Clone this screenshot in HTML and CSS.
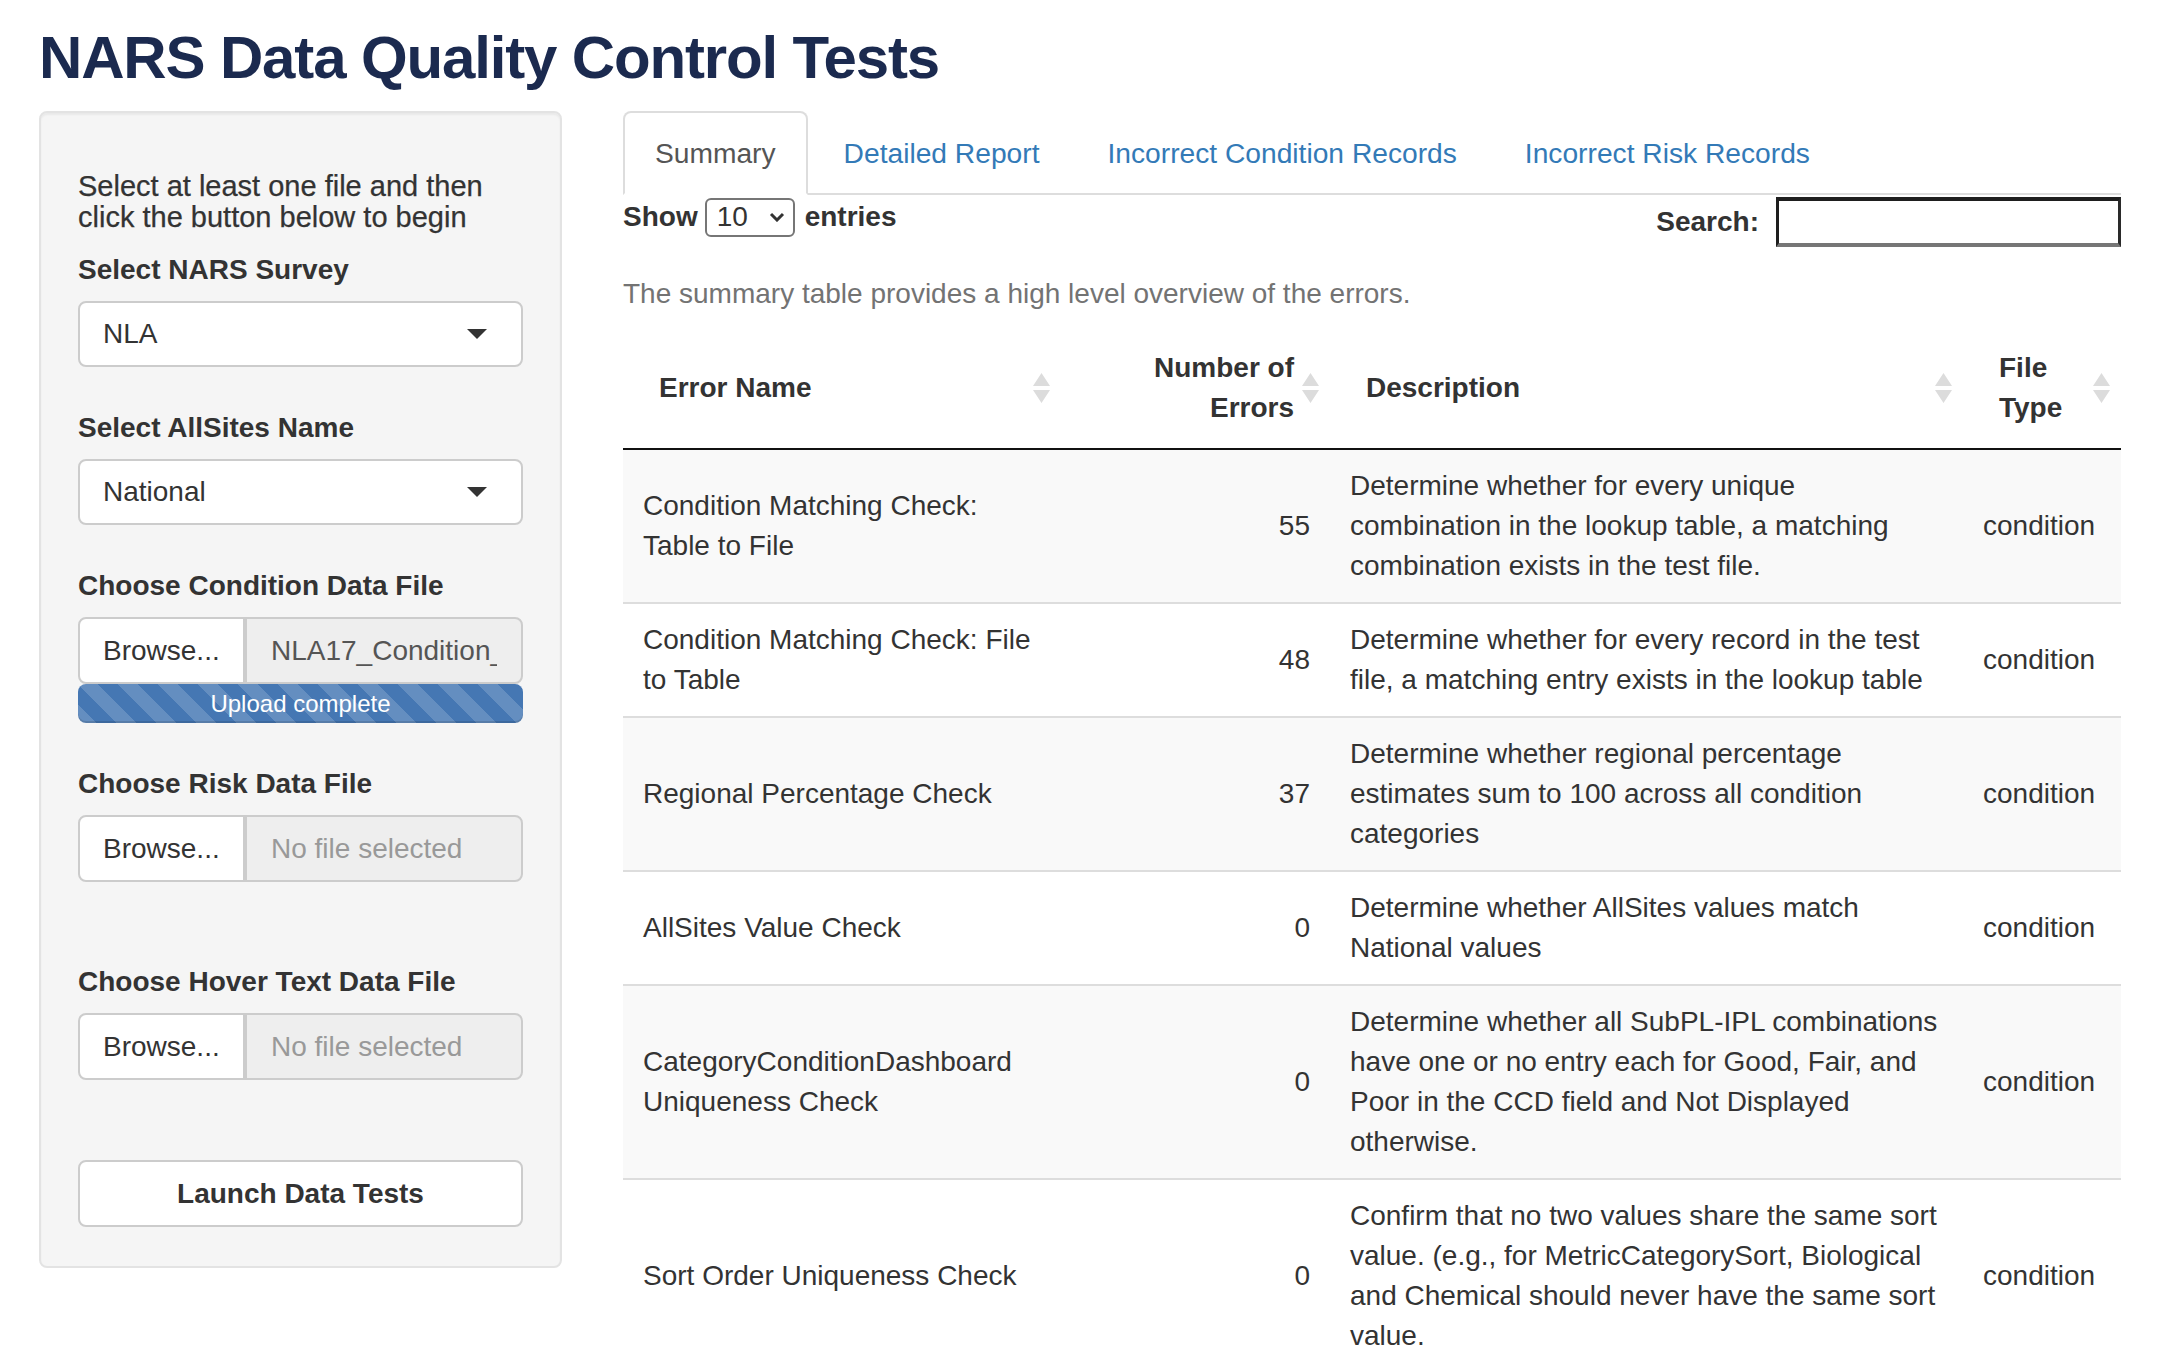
FILE: index.html
```html
<!DOCTYPE html>
<html lang="en">
<head>
<meta charset="utf-8">
<title>NARS Data Quality Control Tests</title>
<link rel="stylesheet" href="styles.css">
</head>
<body>
<div class="page">
  <h1 class="title">NARS Data Quality Control Tests</h1>
  <div class="layout">
    <aside class="well">
      <h5 class="intro">Select at least one file and then click the button below to begin</h5>

      <div class="group">
        <div class="lbl">Select NARS Survey</div>
        <div class="select"><span>NLA</span><svg class="caret" width="20" height="10" viewBox="0 0 20 10"><path d="M0 0H20L10 10Z" fill="#333"/></svg></div>
      </div>

      <div class="group">
        <div class="lbl">Select AllSites Name</div>
        <div class="select"><span>National</span><svg class="caret" width="20" height="10" viewBox="0 0 20 10"><path d="M0 0H20L10 10Z" fill="#333"/></svg></div>
      </div>

      <div class="group">
        <div class="lbl">Choose Condition Data File</div>
        <div class="file">
          <div class="browse">Browse...</div>
          <div class="fname"><div class="fname-text filled">NLA17_Condition_</div></div>
        </div>
        <div class="progress">Upload complete</div>
      </div>

      <div class="group">
        <div class="lbl">Choose Risk Data File</div>
        <div class="file">
          <div class="browse">Browse...</div>
          <div class="fname"><div class="fname-text">No file selected</div></div>
        </div>
        <div class="progress is-hidden"></div>
      </div>

      <div class="group">
        <div class="lbl">Choose Hover Text Data File</div>
        <div class="file">
          <div class="browse">Browse...</div>
          <div class="fname"><div class="fname-text">No file selected</div></div>
        </div>
        <div class="progress is-hidden"></div>
      </div>

      <div class="btn">Launch Data Tests</div>
    </aside>

    <main class="main">
      <ul class="tabs">
        <li class="tab active">Summary</li>
        <li class="tab">Detailed Report</li>
        <li class="tab">Incorrect Condition Records</li>
        <li class="tab">Incorrect Risk Records</li>
      </ul>

      <div class="dt-controls">
        <div class="dt-length">
          <span>Show</span>
          <span class="len-select"><span>10</span><svg width="16" height="10" viewBox="0 0 16 10"><path d="M2 2L8 8L14 2" fill="none" stroke="#333" stroke-width="3"/></svg></span>
          <span>entries</span>
        </div>
        <div class="dt-filter">
          <span>Search:</span>
          <span class="search-input"></span>
        </div>
      </div>

      <p class="summary-note">The summary table provides a high level overview of the errors.</p>

      <table class="dt">
        <colgroup>
          <col class="c-name">
          <col class="c-num">
          <col class="c-desc">
          <col class="c-type">
        </colgroup>
        <thead>
          <tr>
            <th>Error Name<svg class="sort" viewBox="0 0 17 30"><path d="M0 13L8.5 0L17 13Z M0 17H17L8.5 30Z" fill="#dcdcdc"/></svg></th>
            <th class="num">Number of Errors<svg class="sort" viewBox="0 0 17 30"><path d="M0 13L8.5 0L17 13Z M0 17H17L8.5 30Z" fill="#dcdcdc"/></svg></th>
            <th>Description<svg class="sort" viewBox="0 0 17 30"><path d="M0 13L8.5 0L17 13Z M0 17H17L8.5 30Z" fill="#dcdcdc"/></svg></th>
            <th>File Type<svg class="sort" viewBox="0 0 17 30"><path d="M0 13L8.5 0L17 13Z M0 17H17L8.5 30Z" fill="#dcdcdc"/></svg></th>
          </tr>
        </thead>
        <tbody>
          <tr class="odd">
            <td>Condition Matching Check: Table to File</td>
            <td class="num">55</td>
            <td>Determine whether for every unique combination in the lookup table, a matching combination exists in the test file.</td>
            <td>condition</td>
          </tr>
          <tr>
            <td>Condition Matching Check: File to Table</td>
            <td class="num">48</td>
            <td>Determine whether for every record in the test file, a matching entry exists in the lookup table</td>
            <td>condition</td>
          </tr>
          <tr class="odd">
            <td>Regional Percentage Check</td>
            <td class="num">37</td>
            <td>Determine whether regional percentage estimates sum to 100 across all condition categories</td>
            <td>condition</td>
          </tr>
          <tr>
            <td>AllSites Value Check</td>
            <td class="num">0</td>
            <td>Determine whether AllSites values match National values</td>
            <td>condition</td>
          </tr>
          <tr class="odd">
            <td>CategoryConditionDashboard Uniqueness Check</td>
            <td class="num">0</td>
            <td>Determine whether all SubPL-IPL combinations have one or no entry each for Good, Fair, and Poor in the CCD field and Not Displayed otherwise.</td>
            <td>condition</td>
          </tr>
          <tr>
            <td>Sort Order Uniqueness Check</td>
            <td class="num">0</td>
            <td>Confirm that no two values share the same sort value. (e.g., for MetricCategorySort, Biological and Chemical should never have the same sort value.</td>
            <td>condition</td>
          </tr>
        </tbody>
      </table>
    </main>
  </div>
</div>
</body>
</html>
```

FILE: styles.css
```css
* { box-sizing: border-box; }

body {
  margin: 0;
  background: #fff;
  color: #333;
  font-family: "Liberation Sans", Arial, Helvetica, sans-serif;
  font-size: 28px;
  line-height: 40px;
}

.page {
  padding: 25px 0 0 39px;
}

.title {
  margin: 0 0 20px;
  font-size: 60px;
  line-height: 66px;
  letter-spacing: -1.15px;
  font-weight: 700;
  color: #1b2a4f;
}

.layout {
  display: flex;
  align-items: flex-start;
  gap: 61px;
}

/* ---------- sidebar ---------- */
.well {
  width: 523px;
  flex: none;
  background: #f5f5f5;
  border: 2px solid #e3e3e3;
  border-radius: 8px;
  box-shadow: inset 0 2px 2px rgba(0, 0, 0, 0.05);
  padding: 36px 37px 39px;
}

.intro {
  margin: 22px 0 17px;
  font-size: 29px;
  line-height: 31px;
  font-weight: 400;
  color: #333;
  -webkit-text-stroke: 0.25px #333;
}

.group {
  margin-bottom: 41px;
}

.lbl {
  font-weight: 700;
  line-height: 40px;
  margin-bottom: 11px;
}

.select {
  height: 66px;
  background: #fff;
  border: 2px solid #ccc;
  border-radius: 8px;
  display: flex;
  align-items: center;
  justify-content: space-between;
  padding: 0 34px 0 23px;
}

.file {
  display: flex;
  height: 67px;
}

.browse {
  width: 167px;
  flex: none;
  background: #fff;
  border: 2px solid #ccc;
  border-radius: 8px 0 0 8px;
  padding-left: 23px;
  display: flex;
  align-items: center;
}

.fname {
  flex: 1;
  min-width: 0;
  background: #eee;
  border: 2px solid #ccc;
  border-radius: 0 8px 8px 0;
  padding: 0 24px;
  display: flex;
  align-items: center;
}

.fname-text {
  width: 100%;
  overflow: hidden;
  white-space: nowrap;
  color: #999;
}

.fname-text.filled {
  color: #555;
}

.progress {
  height: 39px;
  border-radius: 8px;
  background-color: #4577b3;
  background-image: linear-gradient(45deg,
    rgba(255, 255, 255, 0.17) 25%, transparent 25%, transparent 50%,
    rgba(255, 255, 255, 0.17) 50%, rgba(255, 255, 255, 0.17) 75%,
    transparent 75%, transparent);
  background-size: 40px 40px;
  box-shadow: inset 0 -2px 0 rgba(0, 0, 0, 0.12);
  color: #fff;
  font-size: 24px;
  line-height: 39px;
  text-align: center;
}

.progress.is-hidden {
  visibility: hidden;
}

.btn {
  height: 67px;
  background: #fff;
  border: 2px solid #ccc;
  border-radius: 8px;
  font-weight: 700;
  display: flex;
  align-items: center;
  justify-content: center;
}

/* ---------- main ---------- */
.main {
  width: 1498px;
  flex: none;
}

.tabs {
  display: flex;
  list-style: none;
  margin: 0;
  padding: 0;
  border-bottom: 2px solid #ddd;
}

.tab {
  margin: 0 4px -2px 0;
  padding: 20px 30px;
  border: 2px solid transparent;
  border-radius: 8px 8px 0 0;
  color: #337ab7;
  font-size: 28.2px;
  line-height: 40px;
}

.tab.active {
  color: #555;
  background: #fff;
  border-color: #ddd #ddd transparent;
}

.dt-controls {
  display: flex;
  justify-content: space-between;
  align-items: flex-start;
  padding-top: 2px;
  height: 52px;
}

.dt-length {
  display: flex;
  align-items: center;
  height: 40px;
  font-weight: 700;
}

.len-select {
  width: 90px;
  height: 39px;
  margin: 0 10px 0 7px;
  border: 2px solid #767676;
  border-radius: 6px;
  display: flex;
  align-items: center;
  justify-content: space-between;
  padding: 0 8px 0 10px;
  font-weight: 400;
}

.dt-filter {
  display: flex;
  align-items: center;
  height: 50px;
  font-weight: 700;
}

.search-input {
  width: 345px;
  height: 50px;
  margin-left: 17px;
  background: #fff;
  border-style: solid;
  border-width: 4px 3px 4px 3px;
  border-color: #1e1e1e #2a2a2a #767676 #1e1e1e;
}

.summary-note {
  margin: 27px 0 14px;
  color: #737373;
}

.dt {
  width: 1498px;
  table-layout: fixed;
  border-collapse: separate;
  border-spacing: 0;
}

.c-name { width: 438px; }
.c-num { width: 269px; }
.c-desc { width: 633px; }
.c-type { width: 158px; }

.dt th {
  position: relative;
  padding: 20px 36px;
  text-align: left;
  vertical-align: middle;
  font-weight: 700;
  border-bottom: 2px solid #111;
}

.dt th.num {
  text-align: right;
}

.sort {
  position: absolute;
  right: 11px;
  top: 50%;
  width: 17px;
  height: 30px;
  margin-top: -15px;
}

.dt td {
  padding: 16px 20px;
  vertical-align: middle;
  border-top: 2px solid #ddd;
}

.dt tbody tr:first-child td {
  border-top: 0;
}

.dt tr.odd td {
  background: #f9f9f9;
}

.dt td.num {
  text-align: right;
}
```
